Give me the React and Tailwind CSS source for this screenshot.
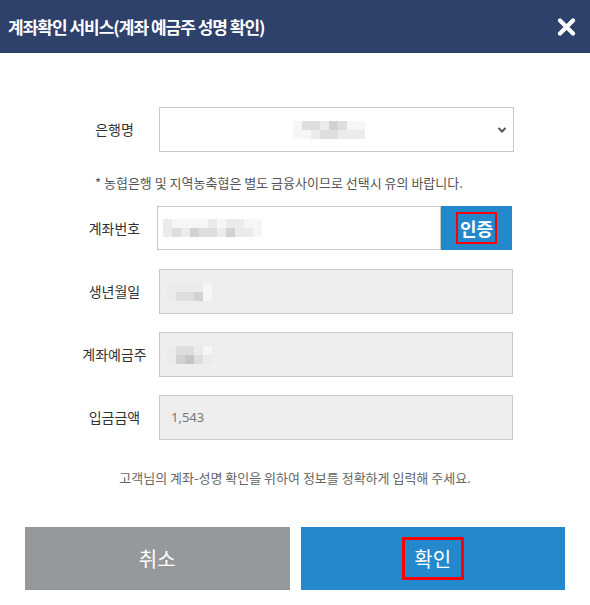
const KR = { fontFamily: '"Noto Sans CJK KR", "Noto Sans", sans-serif' };

// pixelated blur blocks (masked personal data)
function Mosaic({ rows }) {
  return (
    <div className="flex flex-col">
      {rows.map((row, i) => (
        <div key={i} className="flex">
          {row.map((c, j) => (
            <div key={j} className="w-[9px] h-[9px]" style={{ background: c }} />
          ))}
        </div>
      ))}
    </div>
  );
}

const a = "#f6f6f6";
const b = "#ebebeb";
const c = "#dedede";
const d = "#d2d2d2";
const e = "#c6c6c6";

function Row({ label, children, className = "" }) {
  return (
    <div className={`flex items-center ${className}`}>
      <div className="w-[89px] text-center text-[14px] text-[#333]">{label}</div>
      {children}
    </div>
  );
}

function Box({ children }) {
  return (
    <div className="flex-1 h-[45px] bg-[#eeeeee] border border-[#c9c9c9] flex items-center pl-[7px]">
      {children}
    </div>
  );
}

export default function App() {
  return (
    <div className="w-[590px] h-[605px] bg-white" style={KR}>
      <div className="h-[53px] bg-[#2e416b] flex items-center justify-between pl-[8px] pr-[14px]">
        <h1 className="text-white text-[17px] font-bold tracking-[-1px]">
          계좌확인 서비스(계좌 예금주 성명 확인)
        </h1>
        <svg width="19" height="18" viewBox="0 0 19 18">
          <path d="M3 2.5 L16 15.5 M16 2.5 L3 15.5" stroke="#fff" strokeWidth="4.2" strokeLinecap="round" />
        </svg>
      </div>

      <div className="ml-[70px] w-[444px] mt-[54px]">
        <Row label="은행명">
          <div className="flex-1 h-[45px] border border-[#c9c9c9] flex items-center relative pl-[133px]">
            <Mosaic rows={[[a, c, c, b, d, c, a, a], [a, a, b, c, c, b, b, b]]} />
            <svg className="absolute right-[6px]" width="10" height="8" viewBox="0 0 10 8">
              <path d="M1.5 2 L5 5.5 L8.5 2" fill="none" stroke="#555" strokeWidth="2" />
            </svg>
          </div>
        </Row>

        <p className="mt-[22px] mb-[14px] pl-[25px] text-[13px] leading-[18px] text-[#555]">
          * 농협은행 및 지역농축협은 별도 금융사이므로 선택시 유의 바랍니다.
        </p>

        <Row label="계좌번호" className="pr-[2px]">
          <div className="flex-1 h-[44px] border border-[#c9c9c9] flex items-center pl-[5px] -ml-[2px]">
            <Mosaic rows={[[b, a, a, a, a, b, a, b, b, a, a], [b, c, b, d, c, c, b, d, b, b, a]]} />
          </div>
          <div className="w-[71px] h-[44px] bg-[#2388cc] flex items-center justify-center">
            <span className="border-2 border-[#ff0000] px-[2px] text-white text-[18px] font-bold leading-[28px]">인증</span>
          </div>
        </Row>

        <Row label="생년월일" className="mt-[19px] pr-[1px]">
          <Box>
            <Mosaic rows={[[b, b, b, b, a], [b, c, c, d, a]]} />
          </Box>
        </Row>

        <Row label="계좌예금주" className="mt-[18px] pr-[1px]">
          <Box>
            <Mosaic rows={[[b, c, c, b, a], [b, d, e, c, b]]} />
          </Box>
        </Row>

        <Row label="입금금액" className="mt-[18px] pr-[1px]">
          <Box>
            <span className="pl-[4px] text-[13px] text-[#777]" style={{ fontFamily: '"Noto Sans", sans-serif' }}>1,543</span>
          </Box>
        </Row>
      </div>

      <p className="mt-[29px] text-center text-[13px] leading-[18px] text-[#666]">
        고객님의 계좌-성명 확인을 위하여 정보를 정확하게 입력해 주세요.
      </p>

      <div className="mt-[40px] px-[25px] flex gap-[11px]">
        <button className="flex-1 h-[63px] bg-[#96999c] text-white text-[20px]">취소</button>
        <button className="flex-1 h-[63px] bg-[#2388cc] text-white text-[20px] flex items-center justify-center">
          <span className="border-[3px] border-[#ff0000] w-[62px] h-[43px] flex items-center justify-center">확인</span>
        </button>
      </div>
    </div>
  );
}
